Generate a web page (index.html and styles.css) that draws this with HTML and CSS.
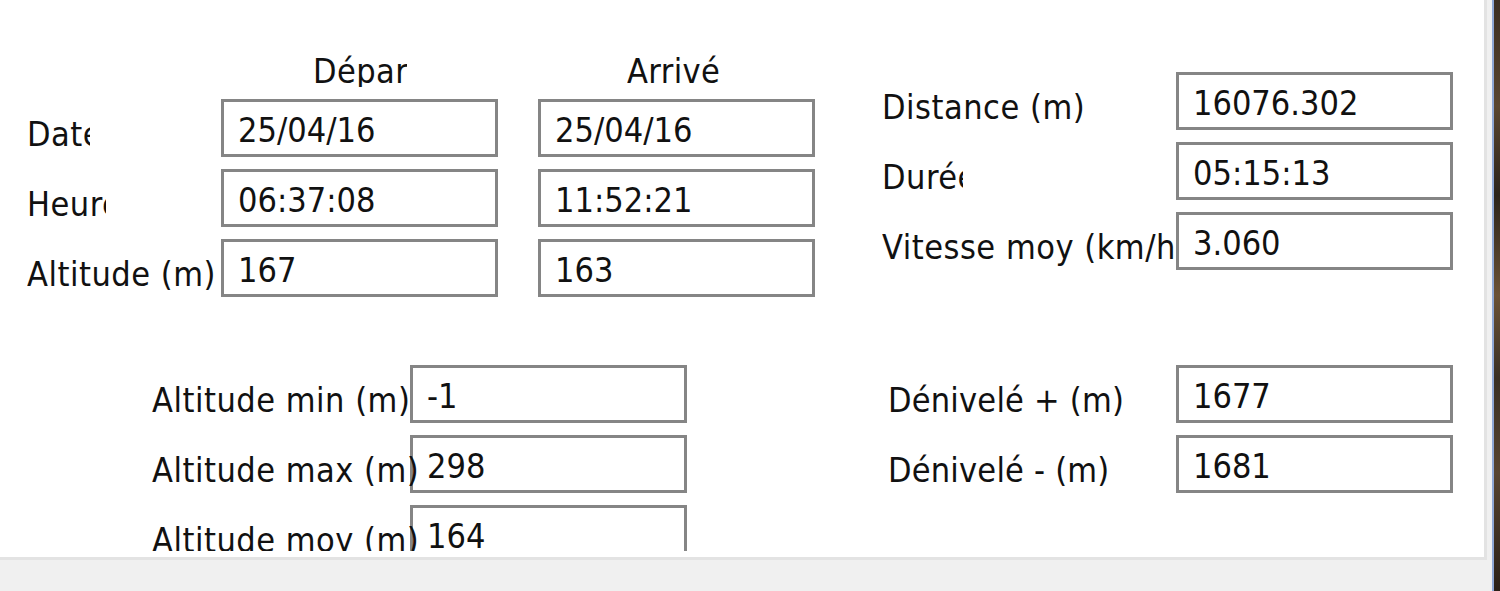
FILE: index.html
```html
<!DOCTYPE html>
<html lang="fr">
<head>
    <meta charset="UTF-8">
    <title>Résumé de la trace</title>
    <link rel="stylesheet" href="styles.css">
</head>
<body>
    <div class="screen">
        <div class="window">
            <div class="panel">
                <div class="content">
                    <div class="top">
                        <div class="times">
                            <div></div>
                            <div class="col-head head-dep">Départ</div>
                            <div class="col-head head-arr">Arrivée</div>

                            <div class="label clip-date">Date</div>
                            <div class="field">25/04/16</div>
                            <div class="field arr">25/04/16</div>

                            <div class="label clip-heure">Heure</div>
                            <div class="field">06:37:08</div>
                            <div class="field arr">11:52:21</div>

                            <div class="label">Altitude (m)</div>
                            <div class="field">167</div>
                            <div class="field arr">163</div>
                        </div>

                        <div class="totals">
                            <div class="label">Distance (m)</div>
                            <div class="field">16076.302</div>

                            <div class="label clip-duree">Durée</div>
                            <div class="field">05:15:13</div>

                            <div class="label clip-speed">Vitesse moy (km/h)</div>
                            <div class="field">3.060</div>
                        </div>
                    </div>

                    <div class="bottom">
                        <div class="alts">
                            <div class="label">Altitude min (m)</div>
                            <div class="field">-1</div>

                            <div class="label">Altitude max (m)</div>
                            <div class="field">298</div>

                            <div class="label">Altitude moy (m)</div>
                            <div class="field">164</div>
                        </div>

                        <div class="climb">
                            <div class="label">Dénivelé + (m)</div>
                            <div class="field">1677</div>

                            <div class="label">Dénivelé - (m)</div>
                            <div class="field">1681</div>
                        </div>
                    </div>
                </div>
            </div>
        </div>
        <div class="desktop"></div>
    </div>
</body>
</html>
```

FILE: styles.css
```css
body {
    margin: 0;
    font-family: "DejaVu Sans Condensed", "DejaVu Sans", sans-serif;
    font-stretch: condensed;
    font-size: 34px;
    color: #111;
    background: #f0f0f0;
}
.screen {
    display: flex;
    width: 1500px;
    height: 591px;
    overflow: hidden;
}
.window {
    width: 1492px;
    background: #f0f0f0;
}
.panel {
    width: 1484px;
    height: 557px;
    background: #fff;
    border-right: 3px solid #e3e3e3;
    border-bottom: 3px solid #e3e3e3;
}
.content {
    height: 551px;
    overflow: hidden;
}
.desktop {
    flex: 1;
    border-left: 2px solid #8ea7d4;
    background: linear-gradient(180deg, #3b2e22 0%, #5a4630 18%, #2c241b 33%, #6b5236 50%, #3a3024 64%, #574430 80%, #2a2018 100%);
}

/* top block: start / arrival times and totals */
.top {
    display: flex;
}
.times {
    display: grid;
    grid-template-columns: 194px 277px 317px;
    grid-template-rows: 34px 58px 58px 58px;
    row-gap: 12px;
    margin: 53px 0 0 27px;
}
.totals {
    display: grid;
    grid-template-columns: 294px 277px;
    grid-auto-rows: 58px;
    row-gap: 12px;
    margin: 72px 0 0 67px;
}

/* bottom block: altitudes and climb */
.bottom {
    display: flex;
    margin-top: 68px;
}
.alts {
    display: grid;
    grid-template-columns: 258px 277px;
    grid-auto-rows: 58px;
    row-gap: 12px;
    margin-left: 152px;
}
/* the closing bracket runs over the edit box */
.alts .label {
    overflow: visible;
    position: relative;
    z-index: 1;
}
.climb {
    display: grid;
    grid-template-columns: 288px 277px;
    grid-auto-rows: 58px;
    row-gap: 12px;
    margin-left: 201px;
}
.climb .label {
    letter-spacing: 0.2px;
}

.col-head {
    height: 34px;
    line-height: 36px;
    letter-spacing: 0.4px;
    overflow: hidden;
    white-space: nowrap;
}
.head-dep {
    margin-left: 92px;
    width: 94px;
}
.head-arr {
    margin-left: 129px;
    width: 94px;
}

.label {
    height: 58px;
    box-sizing: border-box;
    padding-top: 6px;
    line-height: 58px;
    letter-spacing: 0.5px;
    white-space: nowrap;
    overflow: hidden;
}
.clip-date {
    width: 63px;
}
.clip-heure {
    width: 79px;
}
.clip-duree {
    width: 81px;
}
.clip-speed {
    width: 293px;
}

.field {
    height: 58px;
    box-sizing: border-box;
    border: 3px solid #858585;
    padding: 2px 0 0 14px;
    line-height: 52px;
    white-space: nowrap;
    overflow: hidden;
    background: #fff;
}
.field.arr {
    margin-left: 40px;
}
```
